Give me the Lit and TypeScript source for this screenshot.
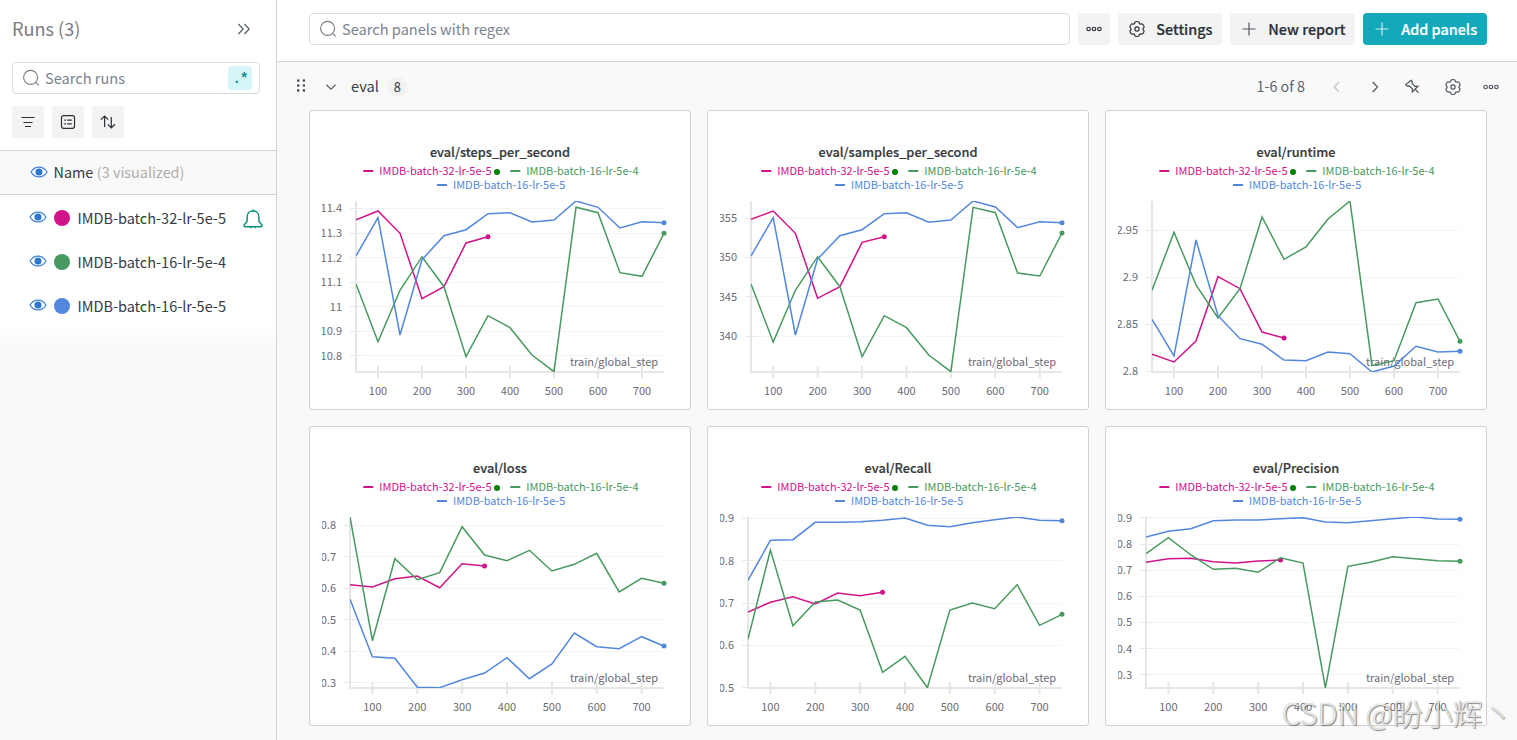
import { css, html, LitElement, svg } from 'lit';
import { customElement, property } from 'lit/decorators.js';

const PINK = '#d0138b';
const GREEN = '#479a5f';
const BLUE = '#5387dd';

const RUNS = [
  { name: 'IMDB-batch-32-lr-5e-5', color: PINK, alert: true },
  { name: 'IMDB-batch-16-lr-5e-4', color: GREEN, alert: false },
  { name: 'IMDB-batch-16-lr-5e-5', color: BLUE, alert: false },
];

// plot area inside a 382x300 panel
const TOP = 91;
const BOTTOM = 262;
const RIGHT = 355;

interface Panel {
  title: string;
  left: number;
  ticks: [string, number][];
  // one line per run, y offset of the sample at step 50, 100, 150...
  lines: number[][];
}

const PANELS: Panel[] = [
  {
    title: 'eval/steps_per_second',
    left: 47,
    ticks: [['11.4', 98.3], ['11.3', 123], ['11.2', 147.6], ['11.1', 172.2], ['11', 196.7], ['10.9', 221.3], ['10.8', 245.7]],
    lines: [
      [109.7, 101, 123.3, 188.7, 176.7, 133, 126.7],
      [174, 231.7, 180.3, 146.7, 176.7, 246.7, 205.7, 217.7, 245, 261.7, 97.3, 102.7, 162.7, 166.3, 123.3],
      [146, 107.7, 225, 149.7, 125.7, 119.7, 103.7, 102.7, 112, 110, 91, 97.3, 118, 111.7, 112.7],
    ],
  },
  {
    title: 'eval/samples_per_second',
    left: 44,
    ticks: [['355', 108.3], ['350', 147.4], ['345', 186.7], ['340', 226]],
    lines: [
      [109.3, 101, 123.3, 188.3, 176.7, 132.3, 126.7],
      [174, 232, 180.3, 146.7, 176.7, 246.7, 205.7, 217.7, 245, 261.7, 97.3, 102.7, 163, 166, 123],
      [146, 107.7, 225, 149, 125.7, 119.7, 103.7, 102.7, 112.3, 110, 91, 97, 117.7, 111.7, 112.7],
    ],
  },
  {
    title: 'eval/runtime',
    left: 47,
    ticks: [['2.95', 120.3], ['2.9', 167.3], ['2.85', 214.3], ['2.8', 261.3]],
    lines: [
      [244.3, 252, 231, 166.7, 178.7, 222, 228],
      [180.3, 122.3, 175, 208, 178.7, 107, 149.3, 137, 109, 91, 255.7, 250.7, 192.7, 189, 231.3],
      [209.3, 246, 130, 205.7, 228.7, 234.3, 250, 250.7, 242, 243.7, 262, 256, 236.3, 242, 241.3],
    ],
  },
  {
    title: 'eval/loss',
    left: 41,
    ticks: [['0.8', 99.3], ['0.7', 130.8], ['0.6', 162.3], ['0.5', 193.7], ['0.4', 225.2], ['0.3', 256.7]],
    lines: [
      [158.7, 161, 152.7, 150, 161.7, 137.7, 140],
      [91, 214.7, 132.7, 153.7, 146.7, 100.7, 129, 134.7, 124.3, 145, 138.3, 127.3, 166, 152.3, 157.3],
      [173.3, 230.7, 232.3, 261.3, 261.7, 253.7, 247, 231.7, 252.7, 238, 207, 220.7, 222.7, 210.7, 220],
    ],
  },
  {
    title: 'eval/Recall',
    left: 41,
    ticks: [['0.9', 92.3], ['0.8', 134.7], ['0.7', 177], ['0.6', 219.4], ['0.5', 261.7]],
    lines: [
      [186, 176.3, 170.7, 178, 167, 169.7, 166.3],
      [213, 124, 199.7, 176, 174, 184, 246.3, 230.3, 261.7, 184, 177, 182.7, 158.7, 199.3, 188.3],
      [154.3, 114.3, 113.7, 96.3, 96.3, 95.7, 94.3, 92, 99.3, 100.7, 96.7, 93.7, 91, 94.3, 94.7],
    ],
  },
  {
    title: 'eval/Precision',
    left: 41,
    ticks: [['0.9', 91.8], ['0.8', 118], ['0.7', 144.1], ['0.6', 170.2], ['0.5', 196.4], ['0.4', 222.6], ['0.3', 248.7]],
    lines: [
      [136.3, 132.7, 132.3, 135.7, 137, 135, 134],
      [127.7, 111.7, 129, 143.3, 142.3, 146.3, 131.7, 137, 262, 140.3, 136.3, 130.7, 132.7, 134.7, 135.3],
      [111, 105.3, 102.7, 94.7, 94, 94, 92.7, 91.7, 96, 96.7, 94.7, 92.7, 91, 93, 93.3],
    ],
  },
];

// six rounded teeth round a 16px box
const gearPath = () => {
  const at = (deg: number, r: number) => {
    const a = (deg * Math.PI) / 180;
    return `${(8 + r * Math.cos(a)).toFixed(2)} ${(8 + r * Math.sin(a)).toFixed(2)}`;
  };
  let d = '';
  for (let i = 0; i < 6; i++) {
    const a = i * 60 - 90;
    d += `${i ? 'L' : 'M'}${at(a - 17, 7.1)}Q${at(a - 12, 7.7)} ${at(a, 7.5)}Q${at(a + 12, 7.7)} ${at(a + 17, 7.1)}`;
    d += `Q${at(a + 21, 5.9)} ${at(a + 30, 5.9)}Q${at(a + 39, 5.9)} ${at(a + 43, 7.1)}`;
  }
  return `${d}Z`;
};

const ICONS = {
  search: svg`<circle cx="7.6" cy="7.4" r="7"/><path d="M12.6 12.4 15.8 15.4"/>`,
  collapse: svg`<path d="M2.4 3 7.2 8 2.4 13M8.4 3 13.2 8 8.4 13"/>`,
  filter: svg`<path d="M1.5 3.5H14.5M3.5 8.5H12.5M5 12.5H11"/>`,
  list: svg`<rect x="1.5" y="1.7" width="13" height="12.6" rx="2"/><path d="M4.3 6.2H6M7.2 6.2H11.8M4.3 9.8H6M7.2 9.8H11.8"/>`,
  sort: svg`<path d="M4.6 13V2.2M1 5.6 4.6 2 8.2 5.6M11.3 3V13.6M7.9 10.3 11.3 13.8 15 10.3"/>`,
  dots: svg`<circle cx="2.6" cy="8" r="1.75"/><circle cx="8" cy="8" r="1.75"/><circle cx="13.4" cy="8" r="1.75"/>`,
  gear: svg`<path d=${gearPath()}/><circle cx="8" cy="8" r="2.1"/>`,
  plus: svg`<path d="M8 1.5V14.5M1.5 8H14.5"/>`,
  left: svg`<path d="M10 3 5.2 8 10 13"/>`,
  right: svg`<path d="M5.7 3 10.5 8 5.7 13"/>`,
  down: svg`<path d="M3.4 5.8 8 10.2 12.6 5.8"/>`,
  pin: svg`<path d="M7 1.2 8.4 2.6 8 4.4 11 7.3 14 7.2 8.3 13 8.3 9.8 5.3 6.9 3.1 7.2 1.7 5.8ZM11.2 10.2 14.4 13.8"/>`,
};

const icon = (name: keyof typeof ICONS) =>
  html`<svg class="icon ${name}" viewBox="0 0 16 16">${ICONS[name]}</svg>`;

const eye = html`<svg class="eye" viewBox="0 0 18 12">
  <path d="M1 6C5 -0.6 13 -0.6 17 6C13 12.6 5 12.6 1 6Z" />
  <circle cx="9" cy="6" r="3.5" />
</svg>`;

const bell = html`<svg class="bell" viewBox="0 0 20 20">
  <path d="M10 2C6.4 2 4.1 4.6 4.1 8V12.2L1.4 15.6C.7 16.8 1 17.8 2.2 17.8H17.8C19 17.8 19.3 16.8 18.6 15.6L15.9 12.2V8C15.9 4.6 13.6 2 10 2Z" />
  <path d="M9 1.6H11M7.2 18.5H8.4M11.6 18.5H12.8" />
</svg>`;

@customElement('line-panel')
export class LinePanel extends LitElement {
  @property({ attribute: false }) panel!: Panel;

  static styles = css`
    :host {
      display: block;
      box-sizing: border-box;
      height: 300px;
      background: #fff;
      border: 1px solid #d1d1d1;
      border-radius: 3px;
    }

    svg {
      display: block;
      width: 382px;
      height: 300px;
      margin: -1px;
    }

    text {
      font-size: 11.03px;
      fill: #6b6b76;
    }

    .title {
      font-size: 12.75px;
      font-weight: 500;
      fill: #363a3d;
      stroke: #363a3d;
      stroke-width: 0.2;
      text-anchor: middle;
    }

    .name {
      font-size: 10.96px;
    }

    .x {
      text-anchor: middle;
    }

    .y,
    .step {
      text-anchor: end;
    }

    .grid {
      stroke: #f5f5f5;
    }

    .tick {
      stroke: #e9e9e9;
    }

    .axis {
      fill: none;
      stroke: #e6e6e6;
      stroke-width: 2;
    }

    .line {
      fill: none;
      stroke-width: 1.5;
    }
  `;

  x(i: number) {
    return this.panel.left + (i * (RIGHT - this.panel.left)) / 14;
  }

  renderLegend(run: { name: string; color: string }, x: number, y: number) {
    return svg`
      <path d="M${x} ${y - 4}h10" stroke=${run.color} stroke-width="2" />
      <text class="name" x=${x + 16} y=${y} style="fill:${run.color}">${run.name}</text>
    `;
  }

  renderLine(ys: number[], color: string) {
    const last = ys.length - 1;
    const points = ys.map((y, i) => `${this.x(i).toFixed(1)},${y}`).join(' ');
    return svg`
      <polyline class="line" points=${points} stroke=${color} clip-path="url(#plot)" />
      <circle cx=${this.x(last)} cy=${ys[last]} r="2.5" fill=${color} />
    `;
  }

  render() {
    const { title, left, ticks, lines } = this.panel;

    return html`<svg viewBox="0 0 382 300">
      <clipPath id="plot"><rect x=${left} y=${TOP} width=${RIGHT - left + 4} height=${BOTTOM - TOP} /></clipPath>
      <clipPath id="inner"><rect x="13" y="0" width="360" height="300" /></clipPath>
      <text class="title" x="191" y="47">${title}</text>
      ${this.renderLegend(RUNS[0], 54.3, 65)}
      <circle cx="188" cy="62" r="3" fill="#008000" />
      ${this.renderLegend(RUNS[1], 201.3, 65)}
      ${this.renderLegend(RUNS[2], 128, 79)}
      <g clip-path="url(#inner)">
        ${ticks.map(
          ([label, y]) => svg`
            <path class="grid" d="M${left} ${Math.floor(y) + 0.5}H${RIGHT}" />
            <path class="tick" d="M${left - 6} ${Math.floor(y) + 0.5}h12" />
            <text class="y" x=${left - 14} y=${y + 4}>${label}</text>
          `
        )}
      </g>
      <path class="axis" d="M${left} ${TOP}V${BOTTOM}H${RIGHT}" />
      ${[1, 3, 5, 7, 9, 11, 13].map(
        (i) => svg`
          <path class="axis" d="M${this.x(i)} ${BOTTOM - 6}v12" />
          <text class="x" x=${this.x(i)} y="285">${(i + 1) * 50}</text>
        `
      )}
      <text class="step" x="349.2" y="256">train/global_step</text>
      ${lines.map((ys, i) => this.renderLine(ys, RUNS[i].color))}
    </svg>`;
  }
}

@customElement('app-root')
export class AppRoot extends LitElement {
  static styles = css`
    :host {
      display: flex;
      position: relative;
      width: 1517px;
      height: 740px;
      overflow: hidden;
      background: #f9f9f9;
      color: #363c44;
      font: 14.6px/20px 'Noto Sans CJK SC', 'Open Sans', sans-serif;
      white-space: nowrap;
    }

    .icon {
      flex: none;
      width: 16px;
      height: 16px;
      fill: none;
      stroke: currentColor;
      stroke-width: 1.2;
      overflow: visible;
    }

    .icon.search {
      color: #79808a;
    }

    /* sidebar */

    .sidebar {
      display: flex;
      flex-direction: column;
      box-sizing: border-box;
      width: 277px;
      border-right: 1px solid #d0d0d0;
    }

    .tools {
      box-sizing: border-box;
      height: 150px;
      padding: 17px 16px 0 12px;
      background: #fff;
    }

    .heading {
      display: flex;
      align-items: center;
      justify-content: space-between;
      height: 22px;
      margin-bottom: 23px;
      padding-right: 8px;
      color: #7b7b7f;
      font-size: 18.1px;
    }

    .heading .icon {
      margin-top: 2px;
      color: #565c66;
    }

    .field {
      display: flex;
      align-items: center;
      box-sizing: border-box;
      height: 32px;
      padding: 0 7px 0 10px;
      background: #fff;
      border: 1px solid #dedede;
      border-radius: 4px;
      color: #7d838c;
    }

    .field span {
      flex: 1;
      margin-left: 6px;
    }

    .regex {
      width: 24px;
      height: 24px;
      background: #d6f5f9;
      border-radius: 4px;
      color: #0e8b9b;
      font: bold 14px/27px 'Liberation Mono', monospace;
      letter-spacing: -0.8px;
      text-align: center;
    }

    .buttons {
      display: flex;
      gap: 8px;
      margin-top: 12px;
    }

    .button {
      display: flex;
      align-items: center;
      box-sizing: border-box;
      height: 32px;
      padding-left: 11px;
      gap: 11.3px;
      background: #f3f3f3;
      border-radius: 4px;
      color: #2b3038;
      font-size: 14.4px;
      font-weight: 500;
      -webkit-text-stroke: 0.2px currentColor;
    }

    .button.square {
      width: 32px;
      padding: 0 8px;
    }

    .name-row {
      display: flex;
      align-items: center;
      box-sizing: border-box;
      height: 45px;
      padding: 0 0 1px 30px;
      border-top: 1px solid #d0d0d0;
      border-bottom: 1px solid #d0d0d0;
      font-size: 14.4px;
    }

    .name-row span {
      margin-left: 5.5px;
    }

    .name-row .muted {
      margin-left: 3.5px;
      color: #adadad;
    }

    .run {
      display: flex;
      align-items: center;
      box-sizing: border-box;
      height: 44px;
      padding: 0 13px 0 29px;
      background: #fff;
    }

    .swatch {
      width: 16px;
      height: 16px;
      margin: 2px 7.4px 0 7px;
      border-radius: 50%;
    }

    .run .name {
      flex: 1;
      padding-top: 2px;
      font-size: 14.5px;
    }

    .eye {
      width: 18px;
      height: 12px;
      fill: #fff;
      stroke: #3a82d2;
      stroke-width: 1.2;
    }

    .eye circle {
      fill: #2b77cf;
      stroke: none;
    }

    .bell {
      width: 20px;
      height: 20px;
      margin-top: 4px;
      fill: none;
      stroke: #0a8f7c;
      stroke-width: 1.5;
    }

    .fade {
      height: 26px;
      background: linear-gradient(#fff, #f9f9f9);
    }

    /* workspace */

    .main {
      flex: 1;
    }

    .topbar {
      display: flex;
      gap: 8px;
      box-sizing: border-box;
      height: 62px;
      padding: 13px 30px 0 32px;
      background: #fff;
      border-bottom: 1px solid #d0d0d0;
    }

    .topbar .field {
      flex: 1;
    }

    .settings {
      width: 104px;
    }

    .report {
      width: 125px;
    }

    .button.add {
      width: 124px;
      background: #13a9ba;
      color: #fff;
    }

    .button .plus {
      opacity: 0.8;
    }

    .section {
      display: flex;
      align-items: center;
      height: 48px;
      padding: 0 18px 0 20px;
    }

    .drag {
      width: 8px;
      height: 13px;
      margin: -2px 21px 0 0;
      fill: #4a505a;
    }

    .section .down {
      margin: 1px 12px 0 -3px;
      color: #5b616b;
    }

    .count {
      width: 21px;
      height: 20px;
      margin: 2px 0 0 8px;
      background: #f2f2f2;
      border-radius: 10px;
      font-size: 12.8px;
      text-align: center;
    }

    .pager {
      display: flex;
      align-items: center;
      margin-left: auto;
      color: #4f5661;
    }

    .pager span {
      margin-right: 24px;
      color: #5b616b;
      font-size: 14.3px;
    }

    .pager .icon {
      margin-top: 2px;
    }

    .pager .left {
      color: #c2c2c4;
      margin-right: 22px;
    }

    .pager .right {
      margin-right: 21px;
    }

    .pager .pin {
      margin-right: 25px;
    }

    .pager .gear {
      margin-right: 22px;
    }

    .panels {
      display: grid;
      grid-template-columns: repeat(3, 382px);
      gap: 16px;
      margin-left: 32px;
    }

    .watermark {
      position: absolute;
      left: 1282px;
      top: 692px;
      color: rgba(255, 255, 255, 0.8);
      font-size: 30px;
      font-weight: 300;
      line-height: 40px;
      text-shadow: 1px 1px 1px rgba(90, 90, 90, 0.75), 0 0 1px rgba(120, 120, 120, 0.7);
    }
  `;

  renderSidebar() {
    return html`<div class="sidebar">
      <div class="tools">
        <div class="heading">Runs (3) ${icon('collapse')}</div>
        <div class="field">${icon('search')}<span>Search runs</span><div class="regex">.*</div></div>
        <div class="buttons">
          <div class="button square">${icon('filter')}</div>
          <div class="button square">${icon('list')}</div>
          <div class="button square">${icon('sort')}</div>
        </div>
      </div>
      <div class="name-row">${eye}<span>Name</span><span class="muted">(3 visualized)</span></div>
      ${RUNS.map(
        (run) => html`<div class="run">
          ${eye}
          <div class="swatch" style="background:${run.color}"></div>
          <div class="name">${run.name}</div>
          ${run.alert ? bell : ''}
        </div>`
      )}
      <div class="fade"></div>
    </div>`;
  }

  render() {
    return html`
      ${this.renderSidebar()}
      <div class="main">
        <div class="topbar">
          <div class="field">${icon('search')}<span>Search panels with regex</span></div>
          <div class="button square">${icon('dots')}</div>
          <div class="button settings">${icon('gear')}Settings</div>
          <div class="button report">${icon('plus')}New report</div>
          <div class="button add">${icon('plus')}Add panels</div>
        </div>
        <div class="section">
          <svg class="drag" viewBox="0 0 8 13">
            ${[1.6, 6.5, 11.4].map((y) => svg`<circle cx="1.2" cy=${y} r="1.35" /><circle cx="7" cy=${y} r="1.35" />`)}
          </svg>
          ${icon('down')} eval
          <div class="count">8</div>
          <div class="pager">
            <span>1-6 of 8</span>
            ${icon('left')} ${icon('right')} ${icon('pin')} ${icon('gear')} ${icon('dots')}
          </div>
        </div>
        <div class="panels">${PANELS.map((panel) => html`<line-panel .panel=${panel}></line-panel>`)}</div>
      </div>
      <div class="watermark">CSDN @盼小辉丶</div>
    `;
  }
}
